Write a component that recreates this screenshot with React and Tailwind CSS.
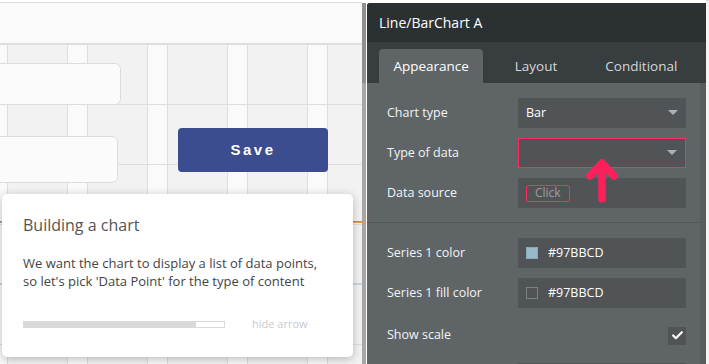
import { Check } from "lucide-react";

const gridBg =
  "[background-image:repeating-linear-gradient(180deg,#dedede_0_1px,transparent_1px_60px),repeating-linear-gradient(90deg,#fafafa_0_7px,#dedede_7px_8px,#f2f2f2_8px_67px,#dedede_67px_68px,#fafafa_68px_80px)]";

function Caret() {
  return (
    <svg width="10" height="6" viewBox="0 0 10 6" className="ml-auto">
      <path d="M0 0 L10 0 L5 5 Z" fill="#a9b1b6" />
    </svg>
  );
}

function Row({ label, children, className = "" }) {
  return (
    <div className="flex items-center h-[30px] shrink-0">
      <div className="w-[131px] text-[12.5px] text-[#f2f4f5]">{label}</div>
      <div
        className={`w-[168px] h-[30px] bg-[#505456] flex items-center px-2 text-[12.5px] text-white ${className}`}
      >
        {children}
      </div>
    </div>
  );
}

function Canvas() {
  return (
    <div className="relative w-[362px] h-full bg-white">
      <div className="h-[3px] border-b border-[#dcdcdc]" />
      <div className="h-[41px] bg-[#fafafa] border-b border-[#dedede]" />
      <div className={`h-[320px] ${gridBg}`} />

      {/* elements on the page */}
      <div className="absolute left-[-10px] top-[63px] w-[131px] h-[42px] rounded-md bg-[#fbfbfb] border border-[#dcdcdc]" />
      <div className="absolute left-[-10px] top-[136px] w-[128px] h-[47px] rounded-md bg-[#fbfbfb] border border-[#dcdcdc]" />
      <div className="absolute left-[178px] top-[128px] w-[150px] h-[44px] rounded bg-[#3b4d8e] flex items-center justify-center text-white text-[15px] font-bold tracking-[2.5px] font-['Liberation_Sans',sans-serif]">
        Save
      </div>
      <div className="absolute left-0 top-[221px] w-full h-[2px] bg-[#e8a25a] border-t border-[#6fa0c8]" />
      <div className="absolute left-0 top-[283px] w-full h-[2px] bg-[#c7d7e3]" />
    </div>
  );
}

function Panel() {
  return (
    <div className="w-[339px] h-full pt-[3px] font-['Open_Sans',sans-serif]">
      <div className="h-full flex flex-col bg-[#5f6467] rounded-tl-[3px] overflow-hidden">
        <div className="h-[39px] shrink-0 bg-[#2b3033] flex items-center px-3 text-[14px] text-white">
          Line/BarChart A
        </div>
        <div className="h-[41px] shrink-0 bg-[#383d3f] flex items-end px-3">
          <div className="w-[105px] h-[34px] rounded-t-[4px] bg-[#5f6467] flex items-center justify-center text-[13.5px] text-white">
            Appearance
          </div>
          <div className="w-[106px] h-[34px] flex items-center justify-center text-[13.5px] text-[#d3d7d9]">
            Layout
          </div>
          <div className="w-[106px] h-[34px] flex items-center justify-center text-[13.5px] text-[#d3d7d9]">
            Conditional
          </div>
        </div>
        <div className="flex flex-1 min-h-0">
          <div className="flex-1">
            <div className="flex flex-col gap-[10px] pl-5 pt-[15px] pb-[14px] border-b border-[#53585a]">
              <Row label="Chart type">
                Bar
                <Caret />
              </Row>
              <Row label="Type of data" className="border border-[#ff2a5f]">
                <Caret />
              </Row>
              <Row label="Data source">
                <div className="h-[17px] px-[8px] border border-[#ff2a5f] rounded-[2px] text-[12px] text-[#9b9fa1] flex items-center">
                  Click
                </div>
              </Row>
            </div>
            <div className="flex flex-col gap-[10px] pl-5 pt-[15px]">
              <Row label="Series 1 color">
                <span className="w-[12px] h-[12px] bg-[#97bbcd] border border-[#8aa9b8] mr-[10px]" />
                #97BBCD
              </Row>
              <Row label="Series 1 fill color">
                <span className="w-[12px] h-[12px] border border-[#7b8083] mr-[10px]" />
                #97BBCD
              </Row>
              <div className="flex items-center h-[35px] shrink-0">
                <div className="w-[281px] text-[12.5px] text-[#f2f4f5]">Show scale</div>
                <div className="w-[18px] h-[18px] bg-[#505456] flex items-center justify-center">
                  <Check size={13} strokeWidth={4} color="#ffffff" />
                </div>
              </div>
              <div className="ml-[131px] w-[168px] h-[30px] shrink-0 bg-[#505456]" />
            </div>
          </div>
          <div className="w-[6px] bg-[#585c5e]" />
        </div>
      </div>
    </div>
  );
}

export default function App() {
  return (
    <div className="relative w-[709px] h-[364px] overflow-hidden flex bg-white font-['Open_Sans',sans-serif]">
      <Canvas />
      <div className="w-[5px] h-full pt-[3px] bg-white">
        <div className="w-[4px] h-full flex flex-col bg-[#a6a6a6]">
          <div className="h-[80px] bg-[#8f8f8f]" />
        </div>
      </div>
      <Panel />
      <div className="w-[3px] h-full bg-[#f4f4f4] border-t border-[#dcdcdc]" />

      {/* pointer arrow */}
      <svg
        className="absolute left-[585px] top-[157px]"
        width="34"
        height="48"
        viewBox="0 0 34 48"
      >
        <path
          d="M17 42 L17 8 M5 19 L17 6 L29 19"
          fill="none"
          stroke="#ff1f5a"
          strokeWidth="7.5"
          strokeLinecap="round"
          strokeLinejoin="round"
        />
      </svg>

      {/* tutorial card */}
      <div className="absolute left-[2px] top-[194px] w-[351px] h-[163px] bg-white rounded-[5px] shadow-[0_2px_10px_rgba(0,0,0,0.25)] px-[21px] pt-[20px]">
        <div className="text-[16px] text-[#555] leading-[22px]">Building a chart</div>
        <div className="mt-[19px] text-[13px] text-[#444] leading-[17.5px]">
          We want the chart to display a list of data points,
          <br />
          so let's pick 'Data Point' for the type of content
        </div>
        <div className="mt-[26px] flex items-center">
          <div className="w-[202px] h-[7px] border border-[#dadada]">
            <div className="w-[172px] h-full bg-[#d9d9d9]" />
          </div>
          <div className="ml-[27px] text-[11px] text-[#c6cbce]">hide arrow</div>
        </div>
      </div>
    </div>
  );
}
